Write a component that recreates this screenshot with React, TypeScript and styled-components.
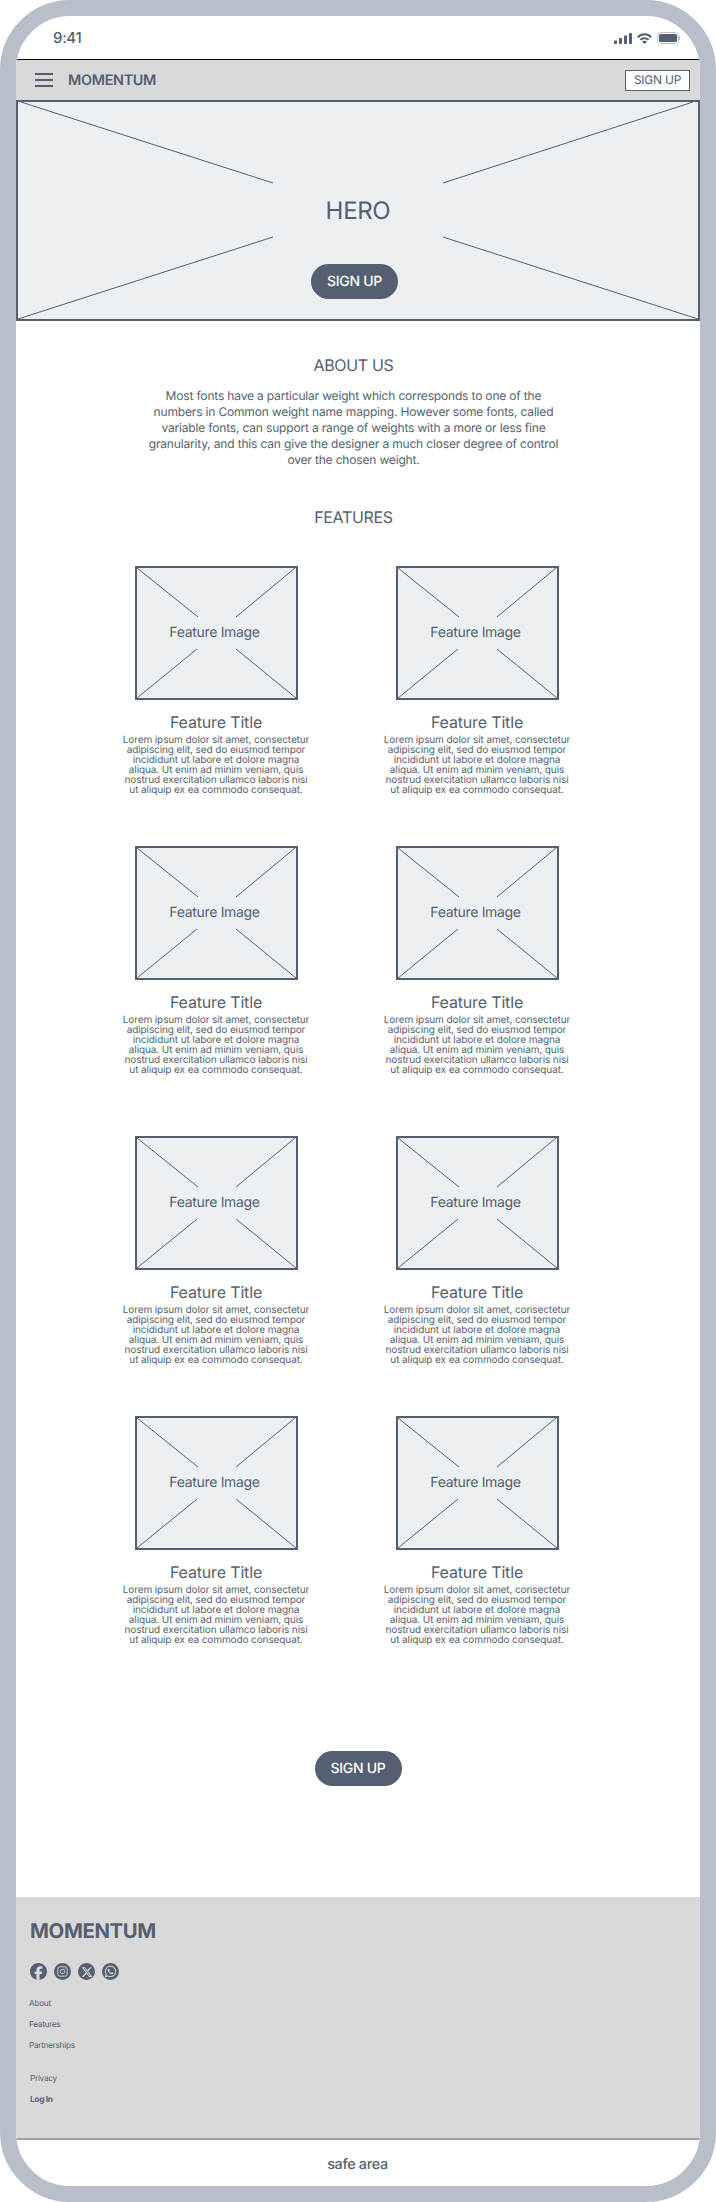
import styled, { createGlobalStyle } from "styled-components";
import { FaFacebook, FaWhatsapp, FaXTwitter } from "react-icons/fa6";

const INK = "#545f71";

const GlobalStyle = createGlobalStyle`
  html, body {
    margin: 0;
    padding: 0;
    background: #fff;
  }
  * {
    box-sizing: border-box;
  }
  body {
    font-family: Inter, "Liberation Sans", sans-serif;
    color: ${INK};
    text-rendering: geometricPrecision;
    letter-spacing: -0.02em;
  }
  button {
    letter-spacing: -0.02em;
    text-rendering: geometricPrecision;
  }
`;

const Frame = styled.div`
  width: 716px;
  height: 2202px;
  border: 16px solid #b8bfcb;
  border-radius: 70px;
  background: #fff;
  display: flex;
  flex-direction: column;
`;

const Screen = styled.div`
  flex: 1;
  border-radius: 54px;
  overflow: hidden;
  display: flex;
  flex-direction: column;
`;

const StatusBar = styled.div`
  height: 44px;
  flex: none;
  border-bottom: 1px solid #000;
  display: flex;
  align-items: center;
  justify-content: space-between;
  padding: 1px 20px 0 37px;
`;

const Time = styled.span`
  font-size: 15px;
  font-weight: 500;
  line-height: 20px;
`;

const StatusIcons = styled.div`
  display: flex;
  align-items: center;
  gap: 5px;
`;

const Header = styled.header`
  height: 40px;
  flex: none;
  background: #d9d9d9;
  display: flex;
  align-items: center;
  padding: 0 10px 0 19px;
`;

const Burger = styled.div`
  width: 18px;
  height: 14px;
  display: flex;
  flex-direction: column;
  justify-content: space-between;
  margin-right: 15px;
  span {
    height: 2px;
    background: ${INK};
  }
`;

const Brand = styled.span`
  font-size: 14.4px;
  font-weight: 600;
  line-height: 20px;
  padding-top: 1px;
  flex: 1;
`;

const OutlineButton = styled.button`
  width: 65px;
  height: 21px;
  padding: 0;
  border: 1px solid ${INK};
  background: #fff;
  color: ${INK};
  font: 400 12px/18px Inter, sans-serif;
`;

const Hero = styled.section`
  position: relative;
  height: 221px;
  flex: none;
  background: #edf0f3;
  border: 2px solid ${INK};
  display: flex;
  flex-direction: column;
  align-items: center;
  padding-top: 94px;
`;

const CrossLines = styled.svg`
  position: absolute;
  top: 0;
  left: 0;
  width: 100%;
  height: 100%;
`;

const HeroTitle = styled.h1`
  position: relative;
  margin: 0;
  font-size: 24px;
  font-weight: 400;
  line-height: 30px;
`;

const PillButton = styled.button<{ $shift?: number }>`
  position: relative;
  width: 87px;
  height: 35px;
  flex: none;
  padding: 0;
  border: 0;
  border-radius: 18px;
  background: ${INK};
  color: #fff;
  font: 500 14px/20px Inter, sans-serif;
  margin-right: ${({ $shift }) => $shift ?? 0}px;
`;

const HeroButton = styled(PillButton)`
  margin-top: 38px;
`;

const About = styled.section`
  display: flex;
  flex-direction: column;
  align-items: center;
  padding: 33px 9px 0 0;
`;

const SectionTitle = styled.h2`
  margin: 0;
  font-size: 16px;
  font-weight: 400;
  line-height: 22px;
`;

const AboutText = styled.p`
  width: 412px;
  margin: 12px 0 38px;
  font-size: 12px;
  line-height: 16px;
  letter-spacing: -0.014em;
  text-align: center;
`;

const FeatureGrid = styled.section`
  display: flex;
  flex-direction: column;
  padding: 38px 0 0 100px;
`;

const FeatureRow = styled.div<{ $gap: number }>`
  display: grid;
  grid-template-columns: 200px 200px;
  column-gap: 61px;
  margin-top: ${({ $gap }) => $gap}px;
`;

const Card = styled.article`
  display: flex;
  flex-direction: column;
  align-items: center;
  height: 229px;
`;

const Placeholder = styled.div`
  position: relative;
  width: 163px;
  height: 134px;
  flex: none;
  background: #edf0f3;
  border: 2px solid ${INK};
  display: flex;
  align-items: center;
  justify-content: center;
  font-size: 14px;
  line-height: 18px;
  padding-right: 3px;
`;

const PlaceholderLabel = styled.span`
  position: relative;
`;

const CardTitle = styled.h3`
  margin: 12px 0 3px;
  font-size: 16px;
  font-weight: 400;
  line-height: 20px;
  letter-spacing: -0.01em;
`;

const CardText = styled.p`
  margin: 0;
  font-size: 10px;
  line-height: 10px;
  letter-spacing: -0.01em;
  text-align: center;
  white-space: pre-line;
`;

const BottomCta = styled.div`
  display: flex;
  justify-content: center;
  margin-top: 106px;
`;

const Footer = styled.footer`
  height: 243px;
  flex: none;
  margin-top: 111px;
  padding: 21px 14px 0;
  background: #d9d9d9;
  border-bottom: 2px solid #9ca3b0;
`;

const FooterBrand = styled.div`
  font-size: 20.3px;
  font-weight: 700;
  line-height: 26px;
`;

const Socials = styled.div`
  display: flex;
  gap: 7px;
  margin-top: 19px;
`;

const SocialDot = styled.span<{ $bare?: boolean }>`
  width: 17px;
  height: 17px;
  border-radius: 50%;
  background: ${({ $bare }) => ($bare ? "transparent" : INK)};
  color: ${({ $bare }) => ($bare ? INK : "#d9d9d9")};
  display: flex;
  align-items: center;
  justify-content: center;
`;

const LinkList = styled.ul<{ $top: number; $left: number }>`
  list-style: none;
  padding: 0;
  margin: ${({ $top }) => $top}px 0 0 ${({ $left }) => $left}px;
`;

const LinkItem = styled.li<{ $bold?: boolean }>`
  font-size: 8.3px;
  line-height: 21px;
  font-weight: ${({ $bold }) => ($bold ? 700 : 400)};
`;

const SafeArea = styled.div`
  flex: 1;
  display: flex;
  align-items: center;
  justify-content: center;
  font-size: 14.4px;
  font-weight: 500;
  padding: 2px 1px 0 0;
`;

const LOREM = `Lorem ipsum dolor sit amet, consectetur
adipiscing elit, sed do eiusmod tempor
incididunt ut labore et dolore magna
aliqua. Ut enim ad minim veniam, quis
nostrud exercitation ullamco laboris nisi
ut aliquip ex ea commodo consequat.`;

const rows = [0, 51, 61, 51];

const Feature = () => (
  <Card>
    <Placeholder>
      <CrossLines viewBox="0 0 159 130" preserveAspectRatio="none">
        <g stroke={INK} strokeWidth="1" fill="none">
          <line x1="0" y1="0" x2="61" y2="49" />
          <line x1="158" y1="0" x2="99" y2="49" />
          <line x1="0" y1="130" x2="60" y2="81" />
          <line x1="159" y1="130" x2="99" y2="81" />
        </g>
      </CrossLines>
      <PlaceholderLabel>Feature Image</PlaceholderLabel>
    </Placeholder>
    <CardTitle>Feature Title</CardTitle>
    <CardText>{LOREM}</CardText>
  </Card>
);

export default function App() {
  return (
    <>
      <GlobalStyle />
      <Frame>
        <Screen>
          <StatusBar>
            <Time>9:41</Time>
            <StatusIcons>
              <svg width="18" height="11" viewBox="0 0 18 11" fill={INK}>
                <rect x="0" y="7.5" width="3" height="3.5" rx="0.8" />
                <rect x="5" y="5" width="3" height="6" rx="0.8" />
                <rect x="10" y="2.5" width="3" height="8.5" rx="0.8" />
                <rect x="15" y="0" width="3" height="11" rx="0.8" />
              </svg>
              <svg width="15" height="11" viewBox="0 0 15 11" fill="none" stroke={INK} strokeWidth="2">
                <path d="M.8 4.2C4.5.3 10.5.3 14.2 4.2" />
                <path d="M3.4 6.8c2.3-2.2 5.9-2.2 8.2 0" />
                <path d="M7.5 11 5 8.6c1.4-1.2 3.6-1.2 5 0z" fill={INK} stroke="none" />
              </svg>
              <svg width="23" height="12" viewBox="0 0 23 12" fill="none">
                <rect x="0.5" y="0.5" width="21" height="11" rx="3" stroke="#b8bfcb" />
                <rect x="2" y="2" width="18" height="8" rx="1.5" fill={INK} />
                <rect x="22" y="4" width="1" height="4" rx="0.5" fill="#b8bfcb" />
              </svg>
            </StatusIcons>
          </StatusBar>
          <Header>
            <Burger>
              <span />
              <span />
              <span />
            </Burger>
            <Brand>MOMENTUM</Brand>
            <OutlineButton>SIGN UP</OutlineButton>
          </Header>
          <Hero>
            <CrossLines viewBox="0 0 680 217" preserveAspectRatio="none">
              <g stroke={INK} strokeWidth="1" fill="none">
                <line x1="3" y1="0" x2="255" y2="81" />
                <line x1="675" y1="0" x2="425" y2="81" />
                <line x1="0" y1="217" x2="255" y2="135" />
                <line x1="680" y1="217" x2="425" y2="135" />
              </g>
            </CrossLines>
            <HeroTitle>HERO</HeroTitle>
            <HeroButton $shift={7}>SIGN UP</HeroButton>
          </Hero>
          <About>
            <SectionTitle>ABOUT US</SectionTitle>
            <AboutText>
              Most fonts have a particular weight which corresponds to one of the numbers in Common
              weight name mapping. However some fonts, called variable fonts, can support a range of
              weights with a more or less fine granularity, and this can give the designer a much
              closer degree of control over the chosen weight.
            </AboutText>
            <SectionTitle>FEATURES</SectionTitle>
          </About>
          <FeatureGrid>
            {rows.map((gap, i) => (
              <FeatureRow key={i} $gap={gap}>
                <Feature />
                <Feature />
              </FeatureRow>
            ))}
          </FeatureGrid>
          <BottomCta>
            <PillButton>SIGN UP</PillButton>
          </BottomCta>
          <Footer>
            <FooterBrand>MOMENTUM</FooterBrand>
            <Socials>
              <SocialDot $bare>
                <FaFacebook size={17} />
              </SocialDot>
              <SocialDot>
                <svg width="11" height="11" viewBox="0 0 11 11" fill="none" stroke="currentColor" strokeWidth="0.9">
                  <rect x="0.8" y="0.8" width="9.4" height="9.4" rx="2.4" />
                  <circle cx="5.5" cy="5.5" r="2.2" />
                  <circle cx="8.2" cy="2.8" r="0.5" fill="currentColor" stroke="none" />
                </svg>
              </SocialDot>
              <SocialDot>
                <FaXTwitter size={12} />
              </SocialDot>
              <SocialDot>
                <FaWhatsapp size={13} />
              </SocialDot>
            </Socials>
            <LinkList $top={14} $left={-1}>
              <LinkItem>About</LinkItem>
              <LinkItem>Features</LinkItem>
              <LinkItem>Partnerships</LinkItem>
            </LinkList>
            <LinkList $top={12} $left={0}>
              <LinkItem>Privacy</LinkItem>
              <LinkItem $bold>Log In</LinkItem>
            </LinkList>
          </Footer>
          <SafeArea>safe area</SafeArea>
        </Screen>
      </Frame>
    </>
  );
}
